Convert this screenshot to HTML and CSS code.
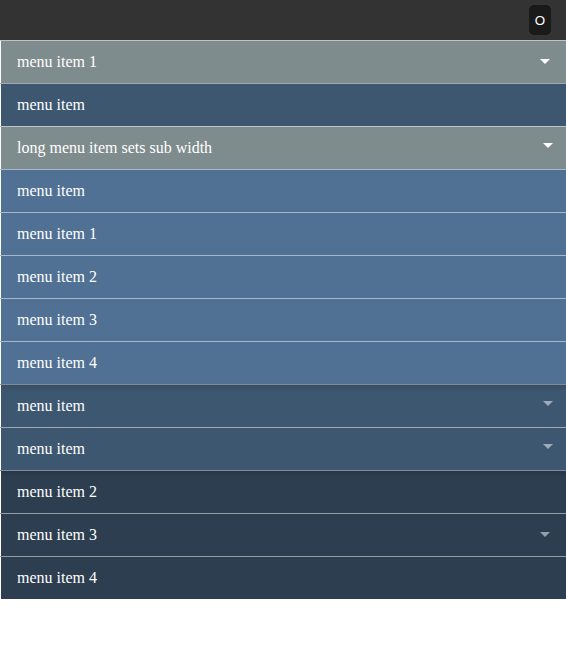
FILE: index.html
```html
<!DOCTYPE html>
<html lang="en">
<head>
<meta charset="utf-8">
<title>Menu</title>
<link rel="stylesheet" href="styles.css">
</head>
<body>
<header class="bar"><button class="toggle">O</button></header>
<nav class="menu">
<a class="item open">menu item 1<span class="arrow"></span></a>
<a class="item sub">menu item</a>
<a class="item open nested">long menu item sets sub width<span class="arrow"></span></a>
<a class="item deep">menu item</a>
<a class="item deep">menu item 1</a>
<a class="item deep">menu item 2</a>
<a class="item deep">menu item 3</a>
<a class="item deep">menu item 4</a>
<a class="item sub nested shaded">menu item<span class="arrow"></span></a>
<a class="item sub nested">menu item<span class="arrow"></span></a>
<a class="item shaded">menu item 2</a>
<a class="item">menu item 3<span class="arrow"></span></a>
<a class="item">menu item 4</a>
</nav>
</body>
</html>
```
FILE: styles.css
```css
body {
  margin: 0;
  background: #fff;
  font: 16px/18px "Liberation Serif", serif;
}
.bar {
  display: flex;
  justify-content: flex-end;
  align-items: center;
  box-sizing: border-box;
  height: 40px;
  padding-right: 15px;
  background: #333;
}
.toggle {
  width: 22px;
  height: 30px;
  padding: 0;
  border: 0;
  border-radius: 5px;
  background: #1a1a1a;
  color: #fff;
  font: 13.333px "Liberation Sans", sans-serif;
}
.menu {
  display: flex;
  flex-direction: column;
}
.item {
  display: flex;
  justify-content: space-between;
  box-sizing: border-box;
  height: 43px;
  padding: 12px 16px 12px 17px;
  border-top: 1px solid #959ea7;
  background: #2c3e50;
  background-clip: padding-box;
  box-shadow: inset 1px 0 #fff;
  color: #fff;
}
.sub {
  border-top-color: #9eaab6;
  background-color: #3d5770;
}
.deep {
  border-top-color: #a7b8c9;
  background-color: #507193;
}
.open {
  border-top-color: #bfc5c6;
  background-color: #7f8c8d;
}
.shaded {
  border-top-color: #838c95;
  background-image: linear-gradient(rgba(0, 0, 0, .12), transparent 6px);
}
.arrow {
  align-self: flex-start;
  margin-top: 6px;
  border: 5px solid transparent;
  border-top-color: #fff;
  border-bottom: 0;
  opacity: .5;
}
.open .arrow {
  opacity: 1;
}
.nested {
  padding-right: 13px;
}
.nested .arrow {
  margin-top: 4px;
}
```
